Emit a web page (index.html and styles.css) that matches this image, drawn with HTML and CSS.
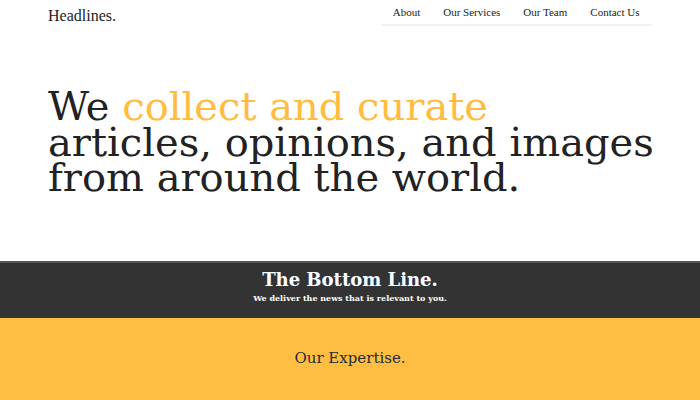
FILE: index.html
```html
<!DOCTYPE html>
<html>
<head>
<meta charset="utf-8">
<link rel="stylesheet" href="styles.css">
</head>
<body>
<header class="topbar">
  <div class="logo">Headlines.</div>
  <nav class="nav">
    <a href="#">About</a>
    <a href="#">Our Services</a>
    <a href="#">Our Team</a>
    <a href="#">Contact Us</a>
  </nav>
</header>
<section class="hero">
  <h1>We <span class="accent">collect and curate</span><br>articles, opinions, and images<br>from around the world.</h1>
</section>
<section class="bottomline">
  <h2>The Bottom Line.</h2>
  <p>We deliver the news that is relevant to you.</p>
</section>
<section class="expertise">
  <h3>Our Expertise.</h3>
</section>
</body>
</html>
```
FILE: styles.css
```css
html, body { margin: 0; padding: 0; background: #fff; }
body { font-family: "DejaVu Serif", "Liberation Serif", serif; color: #222; }
.topbar {
  display: flex;
  justify-content: space-between;
  align-items: flex-start;
  padding: 0 48px 0 48px;
  height: 26px;
}
.logo {
  font-family: "Liberation Serif", serif;
  font-size: 16px;
  line-height: 16px;
  padding-top: 8px;
  color: #222;
}
.nav {
  display: flex;
  border-bottom: 2px solid #f2f2f2;
  padding: 6px 1px 6px 0;
}
.nav a {
  font-family: "Liberation Serif", serif;
  font-size: 11px;
  color: #222;
  text-decoration: none;
  padding: 0 11.5px;
  line-height: 12px;
}
.hero {
  height: 235px;
  padding: 63px 0 0 48px;
  box-sizing: border-box;
}
.hero h1 {
  margin: 0;
  font-weight: normal;
  font-size: 40px;
  line-height: 35.5px;
  white-space: nowrap;
  color: #222;
}
.accent { color: #ffbc40; }
.bottomline {
  background: #333;
  border-top: 2px solid #555;
  height: 57px;
  text-align: center;
  color: #fff;
  box-sizing: border-box;
}
.bottomline h2 {
  margin: 0;
  padding-top: 7px;
  font-size: 18px;
  line-height: 20px;
  font-weight: bold;
  text-shadow: 1px 0 0 rgba(0,80,200,0.4);
}
.bottomline p {
  margin: 2px 0 0;
  font-size: 8px;
  font-weight: bold;
  line-height: 12px;
}
.expertise {
  background: #ffbe42;
  height: 82px;
  text-align: center;
  box-sizing: border-box;
}
.expertise h3 {
  margin: 0;
  padding-top: 31px;
  font-weight: normal;
  font-size: 15px;
  color: #1f2b36;
}
```
